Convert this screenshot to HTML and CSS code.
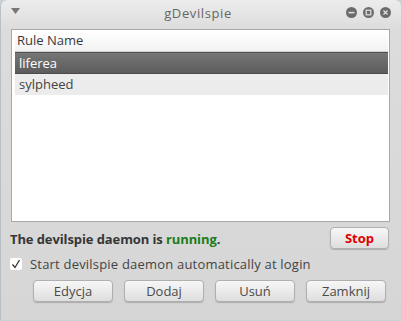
FILE: index.html
```html
<!DOCTYPE html>
<html lang="pl">
<head>
    <meta charset="UTF-8">
    <title>gDevilspie</title>
    <link rel="stylesheet" href="styles.css">
</head>
<body>
    <div class="window">
        <div class="titlebar">
            <svg class="menu-arrow" width="9" height="7" viewBox="0 0 9 7"><path d="M0 0 H9 L4.5 6 Z" fill="#777"/></svg>
            <span class="title">gDevilspie</span>
            <div class="win-btns">
                <span class="win-btn"><svg width="11" height="11" viewBox="0 0 11 11"><circle cx="5.5" cy="5.5" r="5.5" fill="#6b6b6b"/><rect x="2.5" y="4.8" width="6" height="1.6" fill="#ddd"/></svg></span>
                <span class="win-btn"><svg width="11" height="11" viewBox="0 0 11 11"><circle cx="5.5" cy="5.5" r="5.5" fill="#6b6b6b"/><rect x="3.2" y="3.2" width="4.6" height="4.6" fill="none" stroke="#ddd" stroke-width="1.3"/></svg></span>
                <span class="win-btn"><svg width="11" height="11" viewBox="0 0 11 11"><circle cx="5.5" cy="5.5" r="5.5" fill="#6b6b6b"/><path d="M3.5 3.5 L7.5 7.5 M7.5 3.5 L3.5 7.5" stroke="#ddd" stroke-width="1.4"/></svg></span>
            </div>
        </div>

        <div class="content">
            <div class="list">
                <div class="list-header">Rule Name</div>
                <div class="row selected">liferea</div>
                <div class="row odd">sylpheed</div>
            </div>

            <div class="status">
                <span class="status-text">The devilspie daemon is <span class="running">running</span>.</span>
                <button class="btn stop-btn">Stop</button>
            </div>

            <label class="check">
                <span class="check-box">
                    <svg width="10" height="10" viewBox="0 0 10 10"><path d="M1.5 5.5 L4 8.5 L8.5 1" fill="none" stroke="#333" stroke-width="1.3"/></svg>
                </span>
                Start devilspie daemon automatically at login
            </label>

            <div class="actions">
                <button class="btn">Edycja</button>
                <button class="btn">Dodaj</button>
                <button class="btn">Usuń</button>
                <button class="btn">Zamknij</button>
            </div>
        </div>
    </div>
</body>
</html>
```

FILE: styles.css
```css
/* Okno */
body {
    margin: 0;
    background: #c9d0d6;
    font-family: "Open Sans", "DejaVu Sans", sans-serif;
    font-size: 13px;
    color: #3c3c3c;
}

.window {
    width: 401px;
    height: 320px;
    border-radius: 6px 6px 0 0;
    background: linear-gradient(#ececec, #dcdcdc 30px, #d6d6d6);
    overflow: hidden;
    box-shadow: inset 1px 0 0 #b8c0c6;
}

.titlebar {
    height: 25px;
    display: flex;
    align-items: center;
    padding: 0 10px 0 11px;
}

.menu-arrow {
    margin-top: -2px;
}

.title {
    flex: 1;
    text-align: center;
    color: #666;
    font-size: 13px;
    letter-spacing: 0.6px;
    margin-left: 30px;
}

.win-btns {
    display: flex;
    gap: 6px;
}

.win-btn {
    display: flex;
}

.content {
    padding: 4px 11px 0 11px;
}

/* Lista */
.list {
    height: 190px;
    background: #fff;
    border: 1px solid #a8a8a8;
    padding: 1px 1px 0 3px;
}

.list-header {
    height: 20px;
    line-height: 19px;
    padding-left: 2px;
    background: linear-gradient(#ffffff, #f2f2f2);
    border-bottom: 1px solid #cfcfcf;
    color: #3a3a3a;
}

.row {
    height: 21px;
    line-height: 21px;
    padding-left: 4px;
    color: #444;
}

.row.selected {
    background: linear-gradient(#767676, #5c5c5c);
    border-top: 1px solid #505050;
    border-bottom: 1px solid #4a4a4a;
    height: 20px;
    line-height: 20px;
    color: #fff;
}

.row.odd {
    background: #ececec;
}

/* Status */
.status {
    display: flex;
    justify-content: space-between;
    align-items: center;
    margin-top: 5px;
}

.status-text {
    font-weight: bold;
    color: #363636;
    letter-spacing: -0.1px;
    margin-left: -1px;
    padding-top: 2px;
}

.running {
    color: #1b7d1b;
}

.btn {
    font-family: inherit;
    font-size: 13px;
    color: #4a4a4a;
    height: 22px;
    padding: 0;
    border: 1px solid #b0b0b0;
    border-radius: 4px;
    background: linear-gradient(#f7f7f7, #dedede);
    box-shadow: 0 1px 1px rgba(0, 0, 0, 0.2);
    cursor: pointer;
}

.stop-btn {
    width: 59px;
    margin-right: 1px;
    color: #e00000;
    font-weight: bold;
}

/* Checkbox */
.check {
    display: flex;
    align-items: center;
    gap: 8px;
    margin-top: 6px;
    margin-left: -1px;
    letter-spacing: 0.2px;
    color: #444;
}

.check-box {
    width: 12px;
    height: 12px;
    display: flex;
    align-items: center;
    justify-content: center;
    background: #fff;
    border-radius: 2px;
}

/* Przyciski */
.actions {
    display: flex;
    justify-content: flex-end;
    gap: 11px;
    margin-top: 7px;
    margin-right: 4px;
}

.actions .btn {
    width: 80px;
}
```
